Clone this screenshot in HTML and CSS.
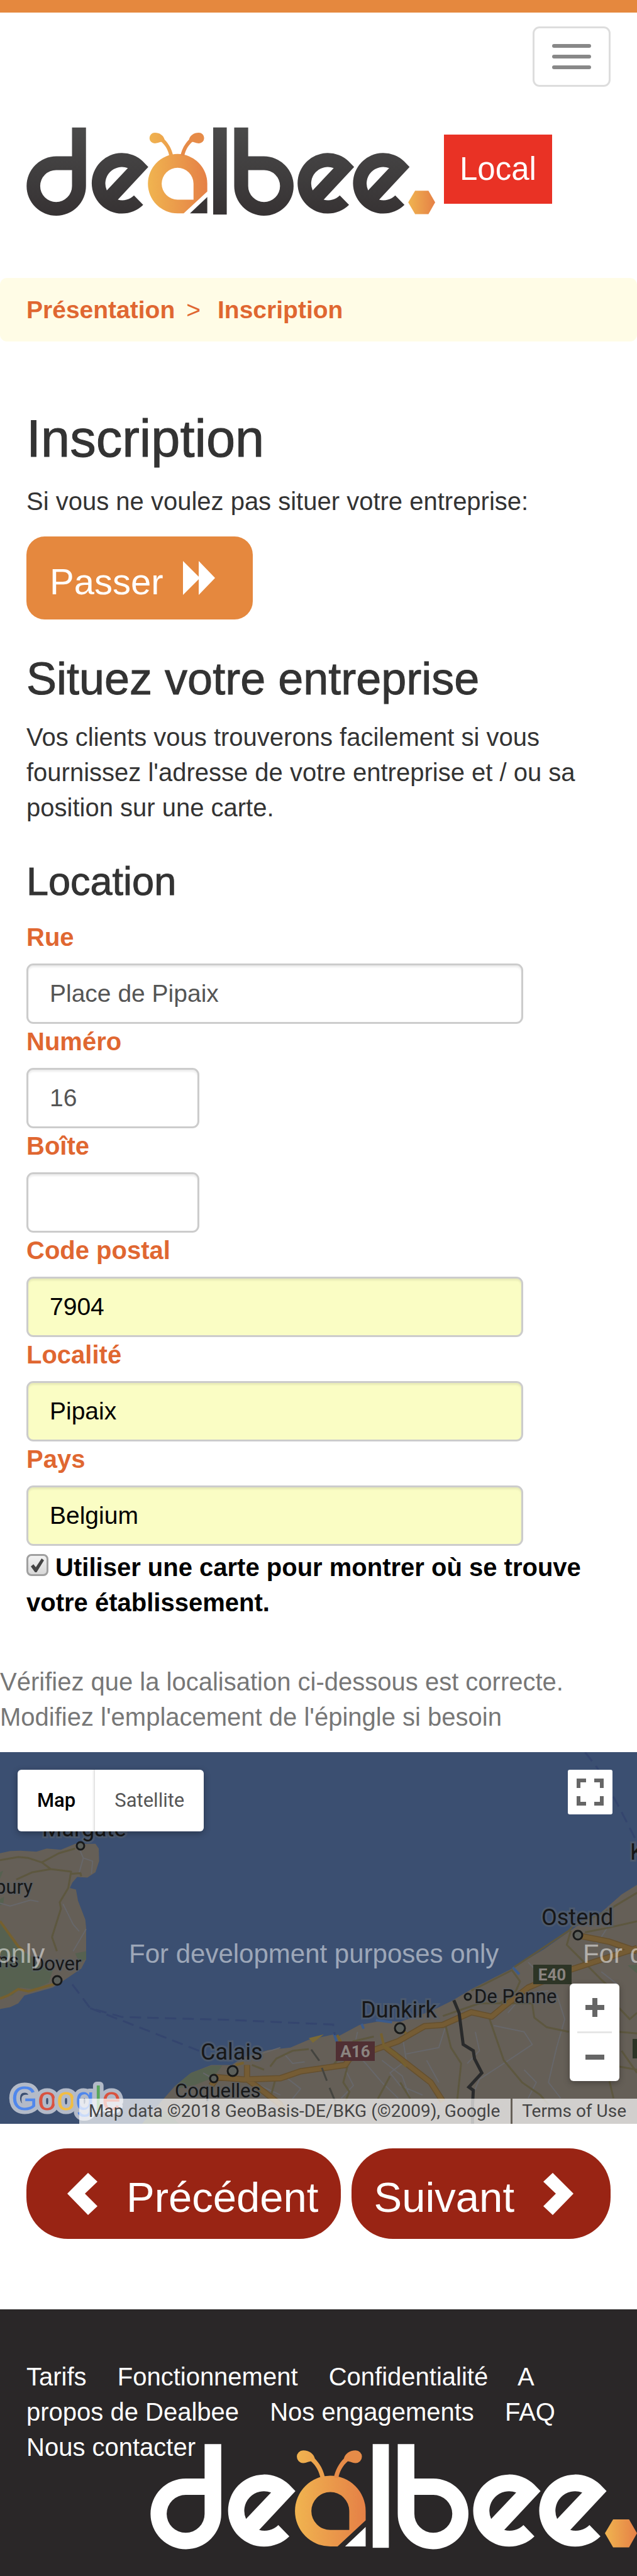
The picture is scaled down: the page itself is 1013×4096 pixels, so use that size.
FILE: index.html
```html
<!DOCTYPE html>
<html lang="fr">
<head>
<meta charset="utf-8">
<meta name="viewport" content="width=device-width, initial-scale=1">
<title>Dealbee Local - Inscription</title>
<link rel="stylesheet" href="styles.css">
</head>
<body>
<svg class="defs" width="0" height="0" aria-hidden="true">
  <defs>
    <linearGradient id="ink" gradientUnits="userSpaceOnUse" x1="0" y1="0" x2="0" y2="449"><stop offset="0" stop-color="#4a4a4a"/><stop offset="1" stop-color="#363233"/></linearGradient>
    <linearGradient id="honey" gradientUnits="userSpaceOnUse" x1="618" y1="0" x2="920" y2="0"><stop offset="0" stop-color="#f0b450"/><stop offset="1" stop-color="#e58046"/></linearGradient>
    <linearGradient id="comb" gradientUnits="userSpaceOnUse" x1="1942" y1="0" x2="2079" y2="0"><stop offset="0" stop-color="#f0b450"/><stop offset="1" stop-color="#e58046"/></linearGradient>
    <path id="curl" fill-rule="evenodd" d="M620 201L592 172A154 154 0 1 0 594 394L547 346A84 84 0 0 1 465 367ZM409 320A84 84 0 0 1 516 207Z"/>
    <path id="antenna" d="M653 27C680 27 698 42 703 62C724 84 738 108 746 142L727 146C722 118 708 92 687 74C675 74 668 81 653 81A27 27 0 0 1 653 27Z"/>
    <g id="mark">
      <path fill-rule="evenodd" d="M232 0H303V297A151 151 0 1 1 152 147H232ZM232 217H152A81 81 0 1 0 232 297Z"/>
      <use href="#curl"/>
      <path d="M920 354V437H832Z"/>
      <rect x="950" width="69" height="443"/>
      <path fill-rule="evenodd" d="M1128 0H1057V297A151 151 0 1 0 1208 147H1128ZM1128 217H1208A81 81 0 1 1 1128 297Z"/>
      <use href="#curl" x="1047"/>
      <use href="#curl" x="1329"/>
      <g fill="url(#honey)">
        <path fill-rule="evenodd" d="M920 286V326L800 437H769A151 151 0 1 1 920 286ZM769 205A81 81 0 1 0 769 367H850V286A81 81 0 0 0 769 205Z"/>
        <use href="#antenna"/>
      </g>
      <use href="#antenna" transform="translate(1530 0) scale(-1 1)" fill="#e68b48"/>
      <path fill="url(#comb)" d="M1942 381L1977 322H2045L2079 381L2045 441H1977Z"/>
    </g>
  </defs>
</svg>

<header class="header">
  <nav class="navbar">
    <button class="toggle" type="button" aria-label="Menu"><span></span><span></span><span></span></button>
  </nav>
  <a class="brand" href="#">
    <svg class="brand-logo" viewBox="0 0 2079 450" role="img" aria-label="dealbee"><use href="#mark" fill="url(#ink)"/></svg>
    <span class="brand-tag">Local</span>
  </a>
</header>

<nav class="breadcrumb"><a href="#">Présentation</a><span>&gt;</span><a href="#">Inscription</a></nav>

<main>
  <div class="container">
    <h1>Inscription</h1>
    <p>Si vous ne voulez pas situer votre entreprise:</p>
    <button class="btn btn-skip" type="button">
      <span class="btn-label">Passer</span>
      <svg class="icon-forward" viewBox="0 0 51 54" aria-hidden="true"><path fill="#fff" d="M0 0L25 25V0L51 27L25 54V29L0 54Z"/></svg>
    </button>

    <h2>Situez votre entreprise</h2>
    <p>Vos clients vous trouverons facilement si vous fournissez l'adresse de votre entreprise et / ou sa position sur une carte.</p>

    <form>
      <h3>Location</h3>
      <div class="field"><label for="street">Rue</label><input id="street" type="text" value="Place de Pipaix"></div>
      <div class="field field-short"><label for="number">Numéro</label><input id="number" type="text" value="16"></div>
      <div class="field field-short"><label for="box">Boîte</label><input id="box" type="text"></div>
      <div class="field field-filled"><label for="zip">Code postal</label><input id="zip" type="text" value="7904"></div>
      <div class="field field-filled"><label for="city">Localité</label><input id="city" type="text" value="Pipaix"></div>
      <div class="field field-filled"><label for="country">Pays</label><input id="country" type="text" value="Belgium"></div>
      <label class="check"><input type="checkbox" checked> Utiliser une carte pour montrer où se trouve votre établissement.</label>
    </form>
  </div>

  <p class="hint">Vérifiez que la localisation ci-dessous est correcte.<br>Modifiez l'emplacement de l'épingle si besoin</p>

  <section class="map" aria-label="Map">
    <svg class="map-canvas" viewBox="0 0 1013 591" preserveAspectRatio="xMidYMid slice">
      <rect width="1013" height="591" fill="#3b4f71"/>
      <g class="geo" transform="scale(.6461 .5025) translate(0 -355)">
        <g class="land">
          <path d="M0 675L25 668L50 667L90 670L115 660L150 664L185 645L235 645L243 660L244 700L235 735L215 752L190 750L178 768L172 785L187 790L192 825L210 885L212 910V1010L200 1040L160 1075L130 1100L60 1125L45 1150L25 1162L0 1168Z"/>
          <path d="M350 1531L370 1500L430 1412L470 1370L520 1345L570 1345L600 1320L660 1298L715 1290L760 1265L822 1248L830 1256L885 1218L940 1205L985 1208L1060 1175L1115 1140L1160 1105L1260 1040L1340 978L1420 905L1480 862L1530 805L1568 775V1531Z"/>
        </g>
        <g class="green">
          <path d="M0 890L25 930L45 975L75 1000L95 1030L130 1045L120 1085L85 1105L50 1100L30 1125L0 1130Z"/>
          <path d="M0 735L8 730L0 755ZM0 820L10 812L8 835L0 840ZM185 992L212 985V1010L195 1020Z"/>
          <path d="M1545 1030L1568 1027V1055Z"/>
          <path d="M430 1412L470 1370L520 1347H547L525 1385L480 1408L440 1418Z"/>
          <path d="M350 1531L365 1505L410 1490L440 1531Z"/>
        </g>
        <g class="minor">
          <path d="M0 833L25 842L75 823L95 828M155 835L180 900L195 922M212 915L180 985M195 660L205 690L228 700L225 740M205 690L195 735"/>
          <path d="M640 1310L690 1290M500 1370L520 1385M700 1310L720 1340L750 1335M880 1240L870 1300L900 1340L940 1400L980 1450M940 1330L990 1380L1010 1452M990 1250L1000 1330L960 1370L985 1410L1040 1440M1050 1330L1080 1400M1095 1230L1080 1290L1000 1310M1170 1240L1180 1300L1150 1340M1215 1220L1290 1240L1310 1280L1240 1340L1180 1390L1160 1450M1250 1180L1290 1120L1350 1110M1370 1120L1390 1200L1370 1290L1350 1400L1380 1450M1290 1360L1320 1400L1300 1450M850 1360L870 1410L840 1450M700 1380L740 1420L720 1452M640 1410L690 1440M1300 1020L1330 1060L1370 1040M1440 930L1470 960L1500 900M1480 1050L1520 1090"/>
        </g>
        <g class="secondary">
          <path d="M0 697L45 687L70 690L103 704L125 725L80 735L40 758M103 704L145 675L185 660M125 725L175 733L168 785L147 830L150 850L128 940L140 985M175 740L198 738L200 748"/>
          <path d="M620 1345L650 1360M665 1350L680 1325L720 1300L760 1295M680 1380L665 1452M855 1350L845 1400L860 1430L850 1460M960 1380L930 1452M985 1400L1010 1452M1095 1210L1110 1290L1135 1340L1125 1460M1205 1200L1240 1330L1285 1400L1330 1440L1350 1470M1090 1190L1180 1150L1310 1150L1315 1195L1345 1225L1400 1240M1160 1110L1260 1045L1280 1080L1270 1110L1230 1150M1260 1040L1400 920L1410 905L1490 860L1568 800M1440 925L1500 910L1568 890M1405 920L1395 965L1430 1010L1480 1075L1520 1120M1524 1165L1550 1200L1568 1180M1524 1240L1568 1245M1530 1300L1568 1370M1524 1350L1568 1360M1500 1396L1510 1450M820 1345L870 1270L920 1255"/>
        </g>
        <g class="casing">
          <path d="M527 1383L600 1391L690 1387L740 1365L850 1345L860 1325L980 1270L1045 1222L1090 1218L1160 1178L1210 1192L1240 1160L1300 1100L1400 1045L1568 975M1422 935L1500 955L1568 985M608 1390V1345M608 1390L650 1430L690 1470L700 1500M945 1285L1020 1360L1060 1400L1090 1460M535 1383L520 1410"/>
        </g>
        <g class="primary">
          <path d="M527 1383L600 1391L690 1387L740 1365L850 1345L860 1325L980 1270L1045 1222L1090 1218L1160 1178L1210 1192L1240 1160L1300 1100L1400 1045L1568 975M1422 935L1500 955L1568 985M608 1390V1345M608 1390L650 1430L690 1470L700 1500M945 1285L1020 1360L1060 1400L1090 1460M535 1383L520 1410"/>
        </g>
        <g class="trunk">
          <path d="M0 890L45 970L60 985M0 1135L20 1125L45 1105L70 1112L130 1090L150 1078M580 1345L600 1338M938 1245L945 1285L975 1310L1000 1350M830 1250L840 1275M985 1230L1000 1245"/>
        </g>
        <path d="M760 1260L797 1248L770 1275Z" fill="#7b6a36"/>
        <path class="inlet" d="M1262 1036L1278 1058M890 1215L895 1230M925 1203L965 1210M822 1246L830 1275"/>
        <path class="border" d="M1117 1140L1130 1180L1140 1280L1165 1300L1168 1325L1186 1370L1154 1415L1165 1425L1163 1470V1531"/>
        <path class="rail" d="M766 1296L785 1330L812 1420L825 1460"/>
        <path class="ferry" d="M178 1090L222 1165L300 1193L560 1202L820 1217L824 1250M222 1165L500 1305M1440 355L1470 405L1520 520L1568 640"/>
      </g>
      <g class="towns">
        <circle cx="128" cy="149" r="6"/><circle cx="91" cy="363" r="7"/><circle cx="919" cy="291" r="7"/><circle cx="744" cy="389" r="5"/><circle cx="636" cy="439" r="8"/><circle cx="370" cy="507" r="8"/><circle cx="340" cy="519" r="6"/>
      </g>
      <g class="labels">
        <text x="67" y="134">Margate</text>
        <text x="861" y="275">Ostend</text>
        <text x="574" y="422">Dunkirk</text>
        <text x="319" y="489">Calais</text>
        <text x="1002" y="171">Knokke</text>
        <g class="small">
          <text x="52" y="225" text-anchor="end">Canterbury</text>
          <text x="30" y="342" text-anchor="end">Downs</text>
          <text x="50" y="347">Dover</text>
          <text x="754" y="399">De Panne</text>
          <text x="278" y="549">Coquelles</text>
        </g>
      </g>
      <g class="shields">
        <rect x="534" y="460" width="62" height="31" fill="#502f33"/><text x="565" y="485">A16</text>
        <rect x="848" y="338" width="61" height="31" fill="#2d3526"/><text x="878" y="363">E40</text>
        <rect x="1006" y="456" width="61" height="31" fill="#2d3526"/>
      </g>
      <g class="watermark">
        <text x="-517" y="335">For development purposes only</text>
        <text x="205" y="335">For development purposes only</text>
        <text x="927" y="335">For development purposes only</text>
      </g>
      <text class="google" x="18" y="569"><tspan fill="#5087ec">G</tspan><tspan fill="#d9523f">o</tspan><tspan fill="#f2bd42">o</tspan><tspan fill="#5087ec">g</tspan><tspan fill="#58a65c">l</tspan><tspan fill="#d9523f">e</tspan></text>
    </svg>
    <div class="map-type"><button type="button" class="active">Map</button><button type="button">Satellite</button></div>
    <button class="map-full" type="button" aria-label="Fullscreen"><svg viewBox="0 0 43 43" aria-hidden="true"><path d="M3 15V3H15M28 3H40V15M40 28V40H28M15 40H3V28" fill="none" stroke="#666" stroke-width="6"/></svg></button>
    <div class="map-zoom">
      <button type="button" aria-label="Zoom in"><svg viewBox="0 0 30 30" aria-hidden="true"><path d="M15 0V30M0 15H30" stroke="#666" stroke-width="8"/></svg></button>
      <button type="button" aria-label="Zoom out"><svg viewBox="0 0 30 30" aria-hidden="true"><path d="M0 15H30" stroke="#666" stroke-width="8"/></svg></button>
    </div>
    <div class="map-credit"><span>Map data ©2018 GeoBasis-DE/BKG (©2009), Google</span><a href="#">Terms of Use</a></div>
  </section>

  <div class="pager">
    <button class="btn btn-prev" type="button">
      <svg class="icon-chevron" viewBox="0 0 48 67" aria-hidden="true"><path fill="#fff" d="M33 0L48 14L28 33L48 53L33 67L0 33Z"/></svg>
      <span class="btn-label">Précédent</span>
    </button>
    <button class="btn btn-next" type="button">
      <span class="btn-label">Suivant</span>
      <svg class="icon-chevron" viewBox="0 0 48 67" aria-hidden="true"><path fill="#fff" d="M15 0L0 14L20 33L0 53L15 67L48 33Z"/></svg>
    </button>
  </div>
</main>

<footer class="footer">
  <nav class="footer-links">
    <a href="#">Tarifs</a>
    <a href="#">Fonctionnement</a>
    <a href="#">Confidentialité</a>
    <a href="#">A propos de Dealbee</a>
    <a href="#">Nos engagements</a>
    <a href="#">FAQ</a>
    <a href="#">Nous contacter</a>
  </nav>
  <svg class="footer-logo" viewBox="0 0 2079 450" role="img" aria-label="dealbee"><use href="#mark" fill="#fff"/></svg>
</footer>
</body>
</html>
```
FILE: styles.css
```css
* { box-sizing: border-box; }

body {
  margin: 0;
  background: #fff;
  color: #333;
  font: 40px/56px "Liberation Sans", Arial, sans-serif;
}

button, input { font: inherit; margin: 0; }
button { border: 0; padding: 0; cursor: pointer; }
a { color: inherit; text-decoration: none; }
p { margin: 0; }
.defs { position: absolute; }

.header {
  border-top: 20px solid #e5883e;
  padding: 22px 42px 98px;
}
.navbar { display: flex; justify-content: flex-end; }
.toggle {
  display: flex;
  flex-direction: column;
  align-items: center;
  justify-content: center;
  gap: 11px;
  width: 124px;
  height: 96px;
  background: #fff;
  border: 3px solid #ddd;
  border-radius: 11px;
}
.toggle span {
  width: 62px;
  height: 6px;
  border-radius: 3px;
  background: #888;
}
.brand {
  display: flex;
  align-items: flex-start;
  gap: 14px;
  margin-top: 64px;
}
.brand-logo { width: 650px; height: 142px; }
.brand-tag {
  margin-top: 12px;
  padding: 27px 25px;
  background: #e93225;
  color: #fff;
  font-size: 51px;
}

.breadcrumb {
  display: flex;
  padding: 23px 42px 22px;
  border-radius: 11px;
  background: #fffce6;
  color: #e06731;
  font-size: 39px;
}
.breadcrumb a { font-weight: bold; }
.breadcrumb span { margin: 0 27px 0 18px; }

.container { padding: 111px 42px 0; }
h1, h2, h3 { margin: 0; font-weight: 400; -webkit-text-stroke: 1px #333; }
h1 { margin-bottom: 27px; font-size: 83px; line-height: 88px; }
h2 { margin: 55px 0 26px; font-size: 72px; line-height: 78px; }
h3 { margin: 56px 0 28px; font-size: 63px; line-height: 66px; }

.btn {
  display: flex;
  align-items: center;
  color: #fff;
  white-space: nowrap;
}
.btn-label { padding-top: 12px; }
.btn-skip {
  gap: 31px;
  height: 132px;
  margin-top: 28px;
  padding: 0 60px 0 37px;
  border-radius: 29px;
  background: #e5883e;
  font-size: 58px;
}
.icon-forward { width: 51px; height: 54px; }

.field { display: flex; flex-direction: column; }
.field label {
  margin-bottom: 14px;
  color: #e06731;
  font-weight: bold;
}
.field input {
  width: 85%;
  height: 96px;
  padding: 0 34px;
  border: 3px solid #ccc;
  border-radius: 11px;
  background: #fff;
  box-shadow: inset 0 3px 3px rgba(0, 0, 0, .075);
  color: #555;
  font-size: 39px;
}
.field-short input { width: 275px; }
.field-filled input { background: #fafdc4; color: #000; }

.check {
  display: block;
  padding-top: 6px;
  color: #000;
  font-weight: bold;
}
.check input {
  appearance: none;
  width: 35px;
  height: 35px;
  padding: 4px;
  border: 3px solid #a0a0a0;
  border-radius: 8px;
  background: linear-gradient(#f2f2f2, #d8d8d8);
}
.check input:checked::before {
  content: "";
  display: block;
  height: 22px;
  background: #444;
  clip-path: polygon(0 58%, 20% 42%, 38% 64%, 82% 0, 100% 14%, 44% 100%, 32% 100%);
}

.hint { margin: 70px 0 28px; color: #777; }

.map { position: relative; height: 591px; overflow: hidden; font-family: Roboto, sans-serif; }
.map-canvas { display: block; width: 100%; height: 100%; }
.map button { background: #fff; }
.geo path { vector-effect: non-scaling-stroke; }
.land { fill: #655f57; }
.green { fill: #566150; }
.minor, .secondary, .casing, .primary, .trunk { fill: none; stroke-linejoin: round; }
.minor { stroke: #67676a; stroke-width: 2; }
.secondary { stroke: #5d573f; stroke-width: 3; }
.casing { stroke: #65502f; stroke-width: 10; }
.primary { stroke: #755c34; stroke-width: 7; }
.trunk { stroke: #75602f; stroke-width: 4; }
.inlet { fill: none; stroke: #3b5b8c; stroke-width: 4; }
.border { fill: none; stroke: #292a2b; stroke-width: 5; }
.rail { fill: none; stroke: #44443f; stroke-width: 3; stroke-dasharray: 22 12; }
.ferry { fill: none; stroke: #34456e; stroke-width: 3; stroke-dasharray: 18 10; }
.towns { fill: #5b5f5b; stroke: #191a1a; stroke-width: 3; }
.labels { fill: #171717; font-size: 36px; paint-order: stroke; stroke: #56606d; stroke-opacity: .6; stroke-width: 6; }
.small { font-size: 31px; stroke-width: 3; }
.shields { fill: #8a8480; font-size: 26px; font-weight: bold; text-anchor: middle; }
.watermark { fill: #fff; fill-opacity: .5; font: 42px "Liberation Sans", Arial, sans-serif; }
.google {
  font: 54px "Liberation Sans", Arial, sans-serif;
  paint-order: stroke;
  stroke: #b3bac8;
  stroke-width: 12;
  stroke-linejoin: round;
}

.map-type {
  position: absolute;
  top: 28px;
  left: 28px;
  display: flex;
  height: 98px;
  border-radius: 6px;
  overflow: hidden;
  box-shadow: 0 3px 11px rgba(0, 0, 0, .3);
  color: #565656;
  font-size: 31px;
}
.map-type button { padding: 0 31px; color: #565656; }
.map-type .active { color: #000; font-weight: 500; box-shadow: inset -4px 0 4px -3px rgba(0, 0, 0, .2); }
.map-full {
  position: absolute;
  top: 28px;
  right: 39px;
  display: flex;
  align-items: center;
  justify-content: center;
  width: 71px;
  height: 71px;
  border-radius: 3px;
}
.map-full svg { width: 43px; height: 43px; }
.map-zoom {
  position: absolute;
  right: 28px;
  bottom: 68px;
  display: flex;
  flex-direction: column;
  width: 79px;
  height: 155px;
  padding: 0 12px;
  border-radius: 6px;
  background: #fff;
  box-shadow: 0 3px 11px rgba(0, 0, 0, .3);
}
.map-zoom button {
  display: flex;
  flex: 1;
  align-items: center;
  justify-content: center;
}
.map-zoom button + button { border-top: 3px solid #e6e6e6; }
.map-zoom svg { width: 30px; height: 30px; }
.map-credit {
  position: absolute;
  right: 0;
  bottom: 0;
  display: flex;
  gap: 3px;
  color: #444;
  font-size: 28px;
  line-height: 40px;
  white-space: nowrap;
}
.map-credit > * { padding: 0 17px 0 15px; background: rgba(255, 255, 255, .7); }

.pager {
  display: flex;
  justify-content: space-between;
  padding: 39px 42px 112px;
}
.pager .btn {
  gap: 46px;
  height: 144px;
  border-radius: 66px;
  background: #992414;
  font-size: 67px;
}
.pager .btn-prev { padding: 0 36px 0 65px; }
.pager .btn-next { padding: 0 59px 0 36px; }
.icon-chevron { width: 48px; height: 67px; }

.footer {
  display: flex;
  flex-direction: column;
  padding: 79px 0 42px;
  background: #2a2728;
  color: #fff;
}
.footer-links { padding: 0 42px; }
.footer-links a { margin-right: 38px; }
.footer-logo {
  align-self: flex-end;
  width: 774px;
  height: 168px;
  margin-top: -33px;
}
```
